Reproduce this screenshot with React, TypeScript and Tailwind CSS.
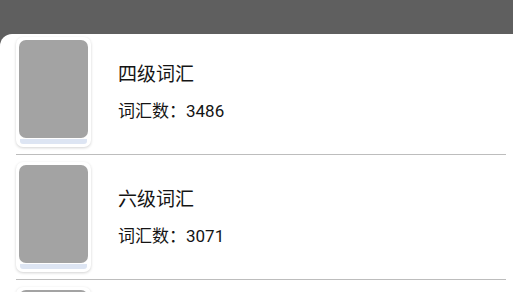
const books = [
  { name: "四级词汇", count: 3486 },
  { name: "六级词汇", count: 3071 },
  { name: "考研词汇", count: 5519 },
]

function Cover() {
  return (
    <div className="w-[75px] shrink-0 rounded-[7px] bg-white p-[3px] shadow-[0_1px_3px_rgba(0,0,0,0.18)]">
      <div className="h-[98px] rounded-[7px] bg-[#a3a3a3]" />
      <div className="mx-[1px] mt-[1px] h-[5px] rounded-b-[3px] bg-[#dde5f3]" />
    </div>
  )
}

export default function App() {
  return (
    <div
      className="flex h-[292px] w-[513px] flex-col overflow-hidden bg-[#5f5f5f]"
      style={{ fontFamily: 'Roboto, "Noto Sans CJK SC", sans-serif' }}
    >
      <div className="h-[34px] shrink-0" />
      <div className="flex-1 rounded-tl-[12px] bg-white">
        {books.map((book, i) => (
          <div
            key={book.name}
            className={`ml-4 mr-[7px] flex items-center border-b border-[#bdbdbd] pb-[7px] ${i === 0 ? "pt-[3px]" : "pt-[7px]"}`}
          >
            <Cover />
            {i < 2 && (
              <div className="ml-[27px] flex flex-col text-[#141414]">
                <span className="text-[19px] leading-[24px]">{book.name}</span>
                <span className="mt-[13px] text-[17px] leading-[22px]">词汇数：{book.count}</span>
              </div>
            )}
          </div>
        ))}
      </div>
    </div>
  )
}
